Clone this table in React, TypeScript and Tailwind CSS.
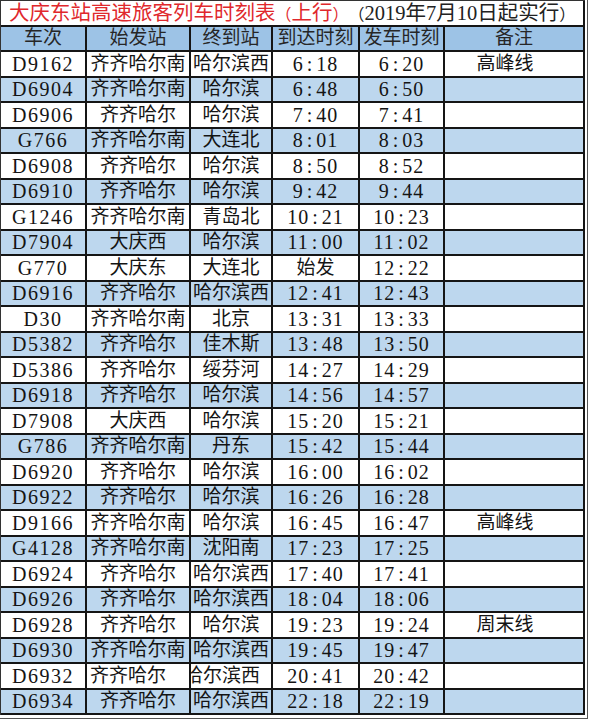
import React from "react";

type Row = {
  no: string;
  from: string;
  to: string;
  arr: string;
  dep: string;
  note?: string;
};

const rows: Row[] = [
  { no: "D9162", from: "齐齐哈尔南", to: "哈尔滨西", arr: "6:18", dep: "6:20", note: "高峰线" },
  { no: "D6904", from: "齐齐哈尔南", to: "哈尔滨", arr: "6:48", dep: "6:50" },
  { no: "D6906", from: "齐齐哈尔", to: "哈尔滨", arr: "7:40", dep: "7:41" },
  { no: "G766", from: "齐齐哈尔南", to: "大连北", arr: "8:01", dep: "8:03" },
  { no: "D6908", from: "齐齐哈尔", to: "哈尔滨", arr: "8:50", dep: "8:52" },
  { no: "D6910", from: "齐齐哈尔", to: "哈尔滨", arr: "9:42", dep: "9:44" },
  { no: "G1246", from: "齐齐哈尔南", to: "青岛北", arr: "10:21", dep: "10:23" },
  { no: "D7904", from: "大庆西", to: "哈尔滨", arr: "11:00", dep: "11:02" },
  { no: "G770", from: "大庆东", to: "大连北", arr: "始发", dep: "12:22" },
  { no: "D6916", from: "齐齐哈尔", to: "哈尔滨西", arr: "12:41", dep: "12:43" },
  { no: "D30", from: "齐齐哈尔南", to: "北京", arr: "13:31", dep: "13:33" },
  { no: "D5382", from: "齐齐哈尔", to: "佳木斯", arr: "13:48", dep: "13:50" },
  { no: "D5386", from: "齐齐哈尔", to: "绥芬河", arr: "14:27", dep: "14:29" },
  { no: "D6918", from: "齐齐哈尔", to: "哈尔滨", arr: "14:56", dep: "14:57" },
  { no: "D7908", from: "大庆西", to: "哈尔滨", arr: "15:20", dep: "15:21" },
  { no: "G786", from: "齐齐哈尔南", to: "丹东", arr: "15:42", dep: "15:44" },
  { no: "D6920", from: "齐齐哈尔", to: "哈尔滨", arr: "16:00", dep: "16:02" },
  { no: "D6922", from: "齐齐哈尔", to: "哈尔滨", arr: "16:26", dep: "16:28" },
  { no: "D9166", from: "齐齐哈尔南", to: "哈尔滨", arr: "16:45", dep: "16:47", note: "高峰线" },
  { no: "G4128", from: "齐齐哈尔南", to: "沈阳南", arr: "17:23", dep: "17:25" },
  { no: "D6924", from: "齐齐哈尔", to: "哈尔滨西", arr: "17:40", dep: "17:41" },
  { no: "D6926", from: "齐齐哈尔", to: "哈尔滨西", arr: "18:04", dep: "18:06" },
  { no: "D6928", from: "齐齐哈尔", to: "哈尔滨", arr: "19:23", dep: "19:24", note: "周末线" },
  { no: "D6930", from: "齐齐哈尔南", to: "哈尔滨西", arr: "19:45", dep: "19:47" },
  { no: "D6932", from: "齐齐哈尔", to: "哈尔滨西", arr: "20:41", dep: "20:42" },
  { no: "D6934", from: "齐齐哈尔", to: "哈尔滨西", arr: "22:18", dep: "22:19" },
];

const font = "font-['Liberation_Serif','Noto_Sans_CJK_SC',serif]";
const cell =
  "flex items-center justify-center overflow-hidden whitespace-nowrap border-r-2 border-b-2 border-[#151515]";

// times get the wide SimSun-style colon
function Time({ t }: { t: string }) {
  if (!t.includes(":")) return <span>{t}</span>;
  const [h, m] = t.split(":");
  return (
    <span className="tracking-[1px]">
      {h}
      <span className="mx-[3px]">:</span>
      {m}
    </span>
  );
}

// full-width brackets set a bit smaller so the title fits like the sheet
const Paren = ({ c }: { c: string }) => <span className="text-[16px]">{c}</span>;

export default function App() {
  return (
    <div className={`w-[589px] h-[722px] bg-white ${font}`}>
      <div className="w-[588px] h-[719px] border-r border-b border-[#555] pr-[2px] pb-[1px]">
        <div className="w-[585px] border-l border-t border-[#333]">
          {/* title */}
          <div className="flex h-[26px] items-center border-r-2 border-b-2 border-[#151515] pl-[8px] text-[20.5px] leading-none whitespace-nowrap">
            <span className="text-[#e0282c]">
              大庆东站高速旅客列车时刻表
              <Paren c="（" />
              上行
              <Paren c="）" />
            </span>
            <span className="text-[#222]">
              <Paren c="（" />
              2019年7月10日起实行
              <Paren c="）" />
            </span>
          </div>

          {/* header */}
          <div className="flex h-[25px] bg-[#9dc3e6] text-[19px] text-[#262626]">
            <div className={`${cell} w-[86px]`}>车次</div>
            <div className={`${cell} w-[104px]`}>始发站</div>
            <div className={`${cell} w-[82px]`}>终到站</div>
            <div className={`${cell} w-[87px]`}>到达时刻</div>
            <div className={`${cell} w-[85px]`}>发车时刻</div>
            <div className={`${cell} w-[140px]`}>备注</div>
          </div>

          {rows.map((r, i) => {
            const odd = i % 2 === 1;
            const last = r.no === "D6932";
            return (
              <div
                key={r.no}
                className={`flex h-[25.5px] text-[19px] text-[#141414] ${odd ? "bg-[#bdd7ee]" : "bg-white"}`}
              >
                <div className={`${cell} w-[86px] tracking-[1.5px] text-[20px]`}>{r.no}</div>
                <div className={`${cell} w-[104px] ${last ? "justify-start pl-[3px]" : ""}`}>{r.from}</div>
                <div className={`${cell} w-[82px] ${last ? "justify-start" : ""}`}>
                  <span className={last ? "-ml-[7px]" : ""}>{r.to}</span>
                </div>
                <div className={`${cell} w-[87px] text-[20px]`}>
                  {r.arr === "始发" ? <span className="text-[19px]">始发</span> : <Time t={r.arr} />}
                </div>
                <div className={`${cell} w-[85px] text-[20px]`}>
                  <Time t={r.dep} />
                </div>
                <div className={`${cell} w-[140px] pr-[18px]`}>{r.note ?? ""}</div>
              </div>
            );
          })}
        </div>
      </div>
    </div>
  );
}
